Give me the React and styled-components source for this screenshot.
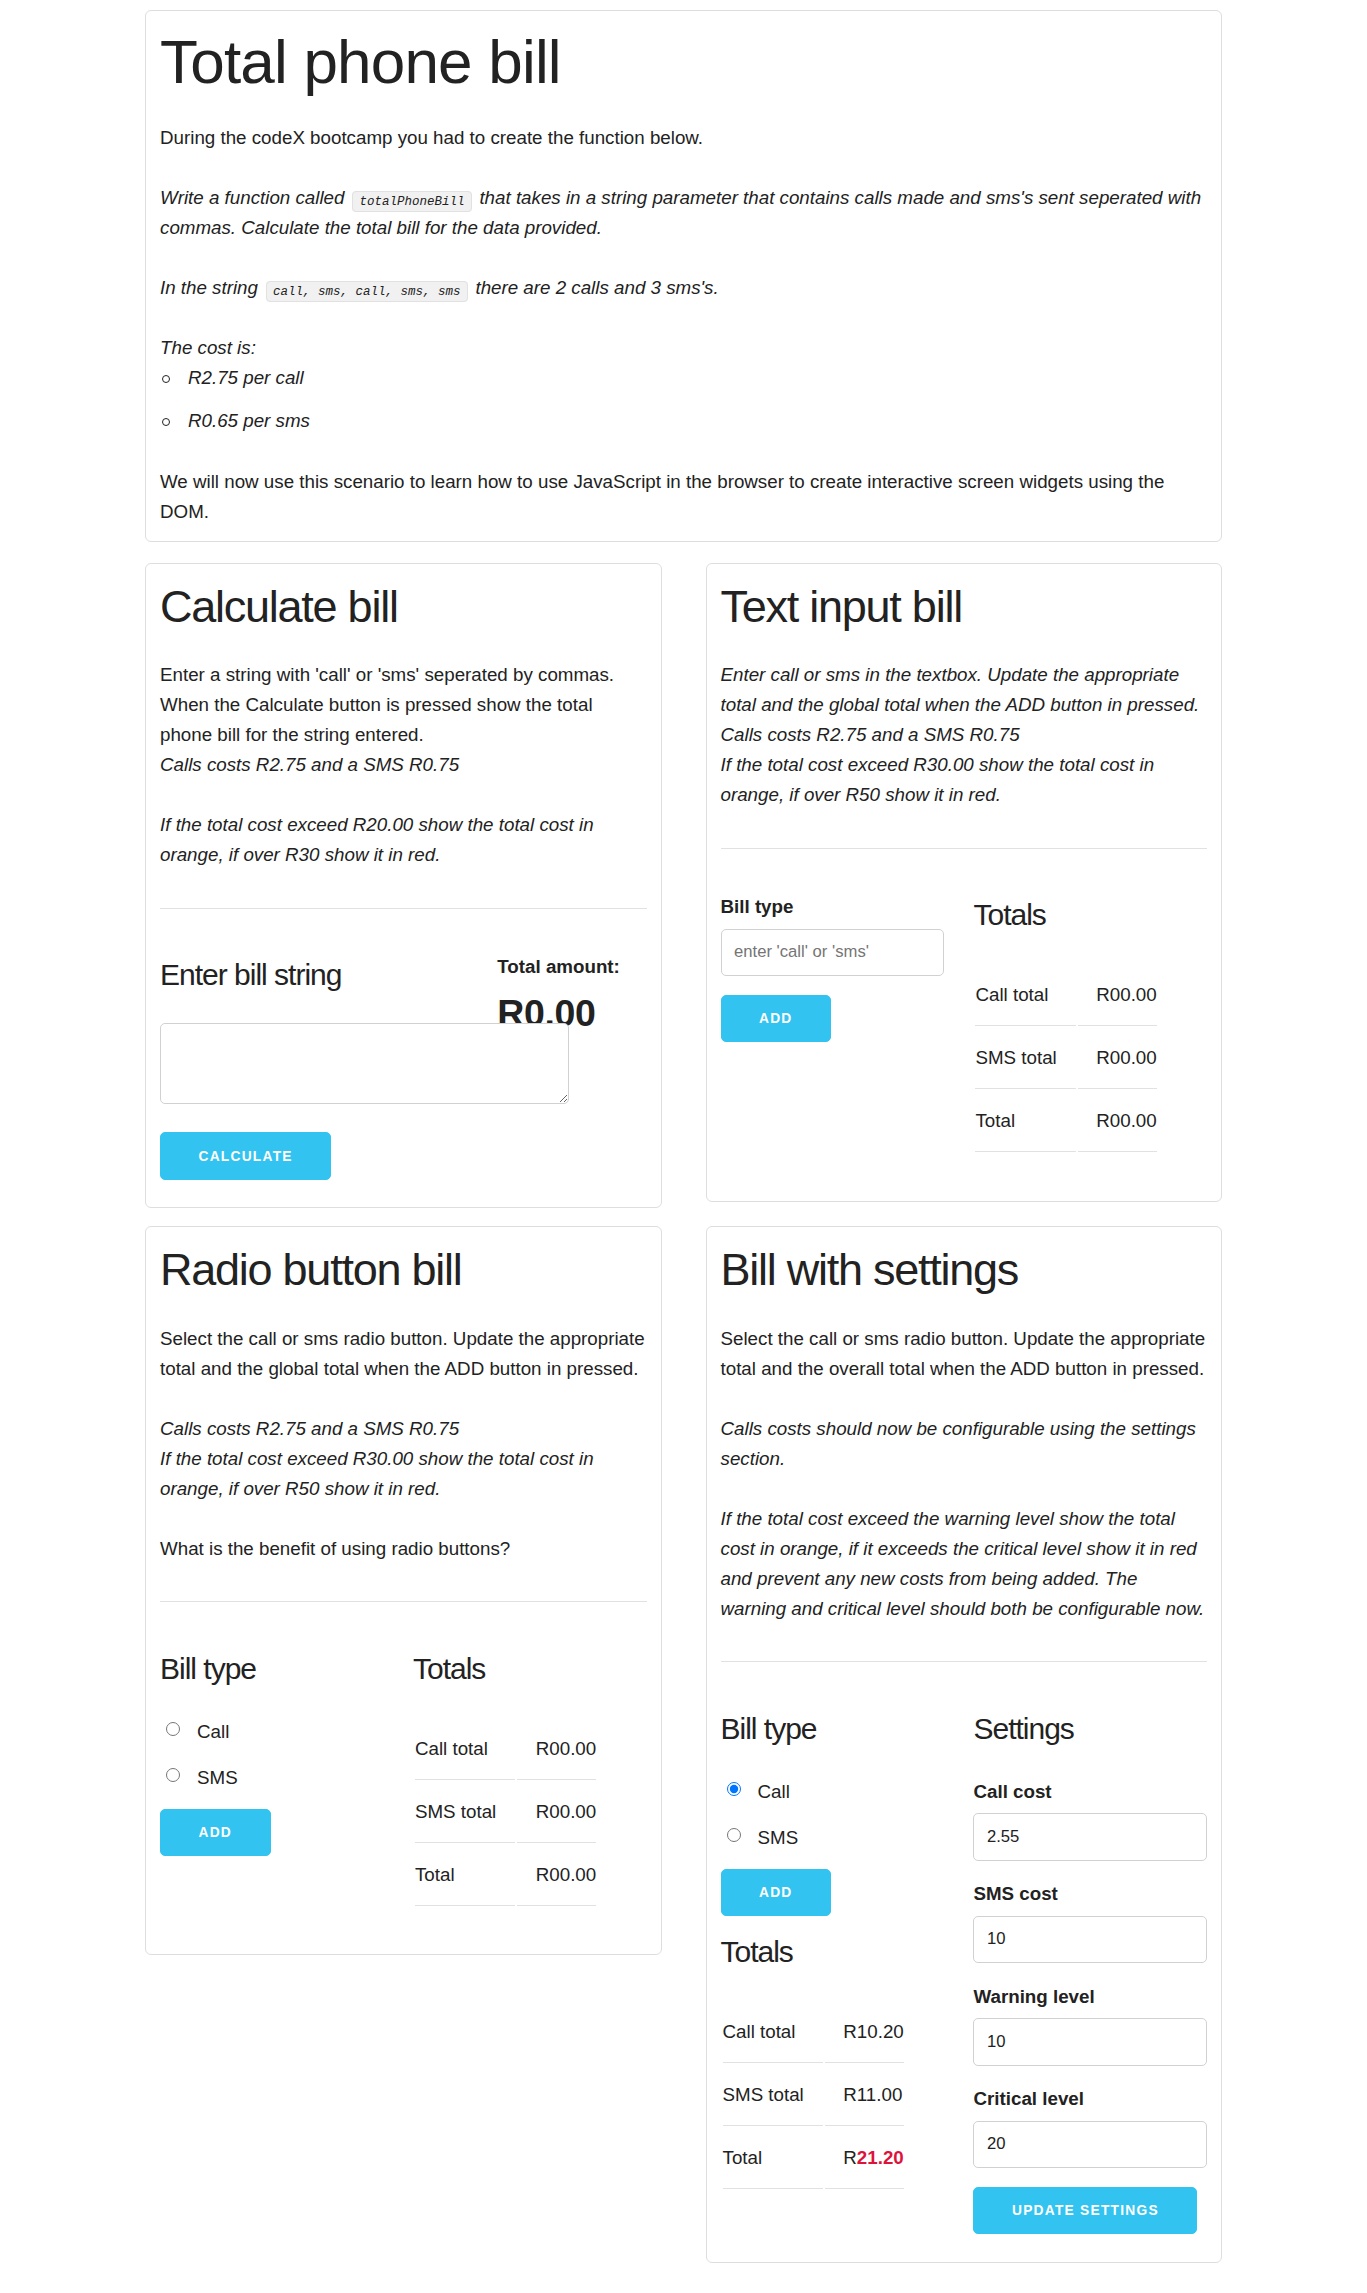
import styled, { createGlobalStyle } from "styled-components";

const GlobalStyle = createGlobalStyle`
  body {
    margin: 0;
    background: #fff;
    color: #222;
    font-family: "Liberation Sans", Arial, sans-serif;
    font-size: 18.75px;
    line-height: 1.6;
  }
  * { box-sizing: border-box; }
`;

const Page = styled.main`
  width: 1077px;
  margin: 0 auto;
  padding: 10px 0 30px;
`;

const Card = styled.section`
  border: 1px solid #dedede;
  border-radius: 6px;
  padding: 15px 14px 15px;
  background: #fff;
`;

const IntroCard = styled(Card)`
  margin-bottom: 21px;
  padding-bottom: 14px;
`;

const Grid = styled.div`
  display: grid;
  grid-template-columns: 1fr 1fr;
  column-gap: 44px;
  row-gap: 18px;
  align-items: start;
`;

const PageTitle = styled.h1`
  margin: 0 0 25px;
  font-size: 62px;
  line-height: 72px;
  font-weight: 400;
  letter-spacing: -0.8px;
`;

const CardTitle = styled.h2`
  margin: 0 0 25px;
  font-size: 45px;
  line-height: 56.25px;
  font-weight: 400;
  letter-spacing: -1.25px;
`;

const SubTitle = styled.h4`
  margin: 0 0 25px;
  font-size: 30px;
  line-height: 46px;
  font-weight: 400;
  letter-spacing: -1px;
`;

const Amount = styled.h3`
  margin: 0;
  font-size: 37.5px;
  line-height: 48.75px;
  font-weight: 700;
  letter-spacing: -0.4px;
`;

const Text = styled.p`
  margin: 0 0 ${({ $flush }) => ($flush ? "0" : "30px")};
  font-style: ${({ $italic }) => ($italic ? "italic" : "normal")};
  &:last-child {
    margin-bottom: 0;
  }
`;

const Code = styled.code`
  font-family: "Liberation Mono", "DejaVu Sans Mono", monospace;
  font-size: 12.5px;
  line-height: 1;
  padding: 2.5px 6.25px;
  margin: 0 2.5px;
  white-space: nowrap;
  background: #f1f1f1;
  border: 1px solid #e1e1e1;
  border-radius: 4px;
`;

const CostList = styled.ul`
  margin: 0 0 31.25px;
  padding: 0;
  list-style: none;
  font-style: italic;
`;

const CostItem = styled.li`
  margin-bottom: 12.5px;
  &::before {
    content: "";
    display: inline-block;
    width: 6px;
    height: 6px;
    margin: 0 18px 0 2px;
    border: 1px solid #222;
    border-radius: 50%;
    vertical-align: middle;
  }
`;

const Divider = styled.hr`
  border: 0;
  border-top: 1px solid #e1e1e1;
  margin: 37.5px 0 43.75px;
`;

const Split = styled.div`
  display: grid;
  grid-template-columns: ${({ $wide }) => ($wide ? "65.33% 30.67%" : "48% 48%")};
  column-gap: 4%;
  align-items: start;
`;

const Column = styled.div`
  min-width: 0;
`;

const FieldLabel = styled.label`
  display: block;
  margin-bottom: 6.25px;
  font-weight: 700;
  line-height: 30px;
`;

const TextField = styled.input`
  display: block;
  width: ${({ $width }) => $width || "100%"};
  height: 47.5px;
  margin: 0 0 18.75px;
  padding: 7.5px 12.5px;
  border: 1px solid #d1d1d1;
  border-radius: 5px;
  background: #fff;
  color: #222;
  font-family: "Liberation Sans", Arial, sans-serif;
  font-size: 16.67px;
  &::placeholder {
    color: #757575;
  }
`;

const BillArea = styled.textarea`
  position: relative;
  display: block;
  width: 409px;
  height: 81px;
  margin: 0 0 28px;
  padding: 7.5px 12.5px;
  border: 1px solid #d1d1d1;
  border-radius: 5px;
  background: #fff;
  font-family: "Liberation Sans", Arial, sans-serif;
  font-size: 16.67px;
`;

const Button = styled.button`
  display: block;
  height: 47.5px;
  margin: 0 0 12.5px;
  padding: 0 37.5px;
  border: 1px solid #33c3f0;
  border-radius: 5px;
  background: #33c3f0;
  color: #fff;
  font-family: "Liberation Sans", Arial, sans-serif;
  font-size: 13.75px;
  font-weight: 700;
  letter-spacing: 1.25px;
  text-transform: uppercase;
  line-height: 45px;
  cursor: pointer;
`;

const RadioRow = styled.label`
  display: flex;
  align-items: flex-start;
  margin-bottom: 16px;
  line-height: 30px;
`;

const Radio = styled.input`
  width: 14px;
  height: 14px;
  margin: 5.5px 17px 0 6px;
  flex: none;
`;

const Table = styled.table`
  border-collapse: separate;
  border-spacing: 2px;
  margin-bottom: 31.25px;
  td {
    padding: 15px 18.75px;
    border-bottom: 1px solid #e1e1e1;
    text-align: left;
    line-height: 30px;
  }
  td:first-child {
    padding-left: 0;
  }
  td:last-child {
    padding-right: 0;
  }
`;

const Danger = styled.span`
  color: #dc143c;
  font-weight: 700;
`;

function Totals({ rows }) {
  return (
    <Table>
      <tbody>
        {rows.map(([name, value]) => (
          <tr key={name}>
            <td>{name}</td>
            <td>{value}</td>
          </tr>
        ))}
      </tbody>
    </Table>
  );
}

function BillRadios({ name, checked }) {
  return (
    <>
      <RadioRow>
        <Radio type="radio" name={name} value="call" defaultChecked={checked} />
        <span>Call</span>
      </RadioRow>
      <RadioRow>
        <Radio type="radio" name={name} value="sms" />
        <span>SMS</span>
      </RadioRow>
    </>
  );
}

const emptyTotals = [
  ["Call total", "R00.00"],
  ["SMS total", "R00.00"],
  ["Total", "R00.00"],
];

export default function App() {
  return (
    <>
      <GlobalStyle />
      <Page>
        <IntroCard>
          <PageTitle>Total phone bill</PageTitle>
          <Text>During the codeX bootcamp you had to create the function below.</Text>
          <Text $italic>
            Write a function called <Code>totalPhoneBill</Code> that takes in a string
            parameter that contains calls made and sms's sent seperated with commas.
            Calculate the total bill for the data provided.
          </Text>
          <Text $italic>
            In the string <Code>call, sms, call, sms, sms</Code> there are 2 calls and 3
            sms's.
          </Text>
          <Text $italic $flush>
            The cost is:
          </Text>
          <CostList>
            <CostItem>R2.75 per call</CostItem>
            <CostItem>R0.65 per sms</CostItem>
          </CostList>
          <Text>
            We will now use this scenario to learn how to use JavaScript in the browser to
            create interactive screen widgets using the DOM.
          </Text>
        </IntroCard>

        <Grid>
          <Card>
            <CardTitle>Calculate bill</CardTitle>
            <Text>
              Enter a string with 'call' or 'sms' seperated by commas. When the Calculate
              button is pressed show the total phone bill for the string entered.
              <br />
              <em>Calls costs R2.75 and a SMS R0.75</em>
            </Text>
            <Text $italic>
              If the total cost exceed R20.00 show the total cost in orange, if over R30
              show it in red.
            </Text>
            <Divider />
            <Split $wide>
              <Column>
                <SubTitle>Enter bill string</SubTitle>
                <BillArea />
                <Button>Calculate</Button>
              </Column>
              <Column>
                <FieldLabel>Total amount:</FieldLabel>
                <Amount>R0.00</Amount>
              </Column>
            </Split>
          </Card>

          <Card>
            <CardTitle>Text input bill</CardTitle>
            <Text $italic>
              Enter call or sms in the textbox. Update the appropriate total and the global
              total when the ADD button in pressed.
              <br />
              Calls costs R2.75 and a SMS R0.75
              <br />
              If the total cost exceed R30.00 show the total cost in orange, if over R50
              show it in red.
            </Text>
            <Divider />
            <Split>
              <Column>
                <FieldLabel>Bill type</FieldLabel>
                <TextField type="text" placeholder="enter 'call' or 'sms'" $width="223px" />
                <Button>Add</Button>
              </Column>
              <Column>
                <SubTitle>Totals</SubTitle>
                <Totals rows={emptyTotals} />
              </Column>
            </Split>
          </Card>

          <Card>
            <CardTitle>Radio button bill</CardTitle>
            <Text>
              Select the call or sms radio button. Update the appropriate total and the
              global total when the ADD button in pressed.
            </Text>
            <Text $italic>
              Calls costs R2.75 and a SMS R0.75
              <br />
              If the total cost exceed R30.00 show the total cost in orange, if over R50
              show it in red.
            </Text>
            <Text>What is the benefit of using radio buttons?</Text>
            <Divider />
            <Split>
              <Column>
                <SubTitle>Bill type</SubTitle>
                <BillRadios name="radioBill" />
                <Button>Add</Button>
              </Column>
              <Column>
                <SubTitle>Totals</SubTitle>
                <Totals rows={emptyTotals} />
              </Column>
            </Split>
          </Card>

          <Card>
            <CardTitle>Bill with settings</CardTitle>
            <Text>
              Select the call or sms radio button. Update the appropriate total and the
              overall total when the ADD button in pressed.
            </Text>
            <Text $italic>
              Calls costs should now be configurable using the settings section.
            </Text>
            <Text $italic>
              If the total cost exceed the warning level show the total cost in orange, if
              it exceeds the critical level show it in red and prevent any new costs from
              being added. The warning and critical level should both be configurable now.
            </Text>
            <Divider />
            <Split>
              <Column>
                <SubTitle>Bill type</SubTitle>
                <BillRadios name="settingsBill" checked />
                <Button>Add</Button>
                <SubTitle>Totals</SubTitle>
                <Totals
                  rows={[
                    ["Call total", "R10.20"],
                    ["SMS total", "R11.00"],
                    [
                      "Total",
                      <>
                        R<Danger>21.20</Danger>
                      </>,
                    ],
                  ]}
                />
              </Column>
              <Column>
                <SubTitle>Settings</SubTitle>
                <FieldLabel>Call cost</FieldLabel>
                <TextField type="text" defaultValue="2.55" />
                <FieldLabel>SMS cost</FieldLabel>
                <TextField type="text" defaultValue="10" />
                <FieldLabel>Warning level</FieldLabel>
                <TextField type="text" defaultValue="10" />
                <FieldLabel>Critical level</FieldLabel>
                <TextField type="text" defaultValue="20" />
                <Button>Update settings</Button>
              </Column>
            </Split>
          </Card>
        </Grid>
      </Page>
    </>
  );
}
